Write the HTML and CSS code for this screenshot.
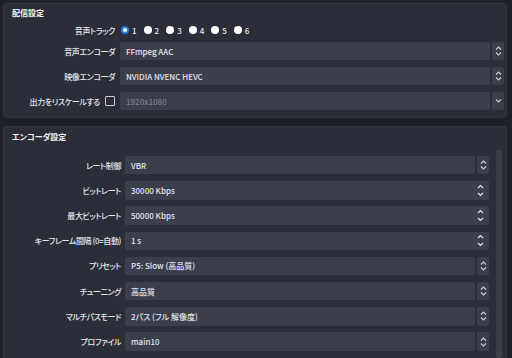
FILE: index.html
```html
<!DOCTYPE html>
<html lang="ja">
<head>
    <meta charset="UTF-8">
    <title>配信設定</title>
    <link rel="stylesheet" href="styles.css">
</head>
<body>

<section class="panel panel-stream">
    <h2 class="panel-title">配信設定</h2>
    <div class="rows">
        <div class="row row-radio">
            <label class="label">音声トラック</label>
            <div class="tracks">
                <span class="track"><span class="radio checked"></span>1</span>
                <span class="track"><span class="radio"></span>2</span>
                <span class="track"><span class="radio"></span>3</span>
                <span class="track"><span class="radio"></span>4</span>
                <span class="track"><span class="radio"></span>5</span>
                <span class="track"><span class="radio"></span>6</span>
            </div>
        </div>
        <div class="row">
            <label class="label">音声エンコーダ</label>
            <div class="combo">
                <div class="field">FFmpeg AAC</div>
                <div class="btn"><svg width="7" height="10" viewBox="0 0 7 10"><path d="M1 3.5 3.5 1 6 3.5M1 6.5 3.5 9 6 6.5" fill="none" stroke="#c8ccd4" stroke-width="1.1"/></svg></div>
            </div>
        </div>
        <div class="row">
            <label class="label">映像エンコーダ</label>
            <div class="combo">
                <div class="field">NVIDIA NVENC HEVC</div>
                <div class="btn"><svg width="7" height="10" viewBox="0 0 7 10"><path d="M1 3.5 3.5 1 6 3.5M1 6.5 3.5 9 6 6.5" fill="none" stroke="#c8ccd4" stroke-width="1.1"/></svg></div>
            </div>
        </div>
        <div class="row">
            <label class="label">出力をリスケールする <span class="checkbox"></span></label>
            <div class="combo">
                <div class="field disabled">1920x1080</div>
                <div class="btn"><svg width="7" height="6" viewBox="0 0 7 6"><path d="M1 1.5 3.5 4 6 1.5" fill="none" stroke="#c8ccd4" stroke-width="1.2"/></svg></div>
            </div>
        </div>
    </div>
</section>

<section class="panel panel-encoder">
    <h2 class="panel-title">エンコーダ設定</h2>
    <div class="scroll">
        <div class="rows rows-encoder">
            <div class="row">
                <label class="label">レート制御</label>
                <div class="combo">
                    <div class="field">VBR</div>
                    <div class="btn"><svg width="7" height="10" viewBox="0 0 7 10"><path d="M1 3.5 3.5 1 6 3.5M1 6.5 3.5 9 6 6.5" fill="none" stroke="#c8ccd4" stroke-width="1.1"/></svg></div>
                </div>
            </div>
            <div class="row">
                <label class="label">ビットレート</label>
                <div class="spin">
                    <span>30000 Kbps</span>
                    <span class="arrows">
                        <svg width="7" height="5" viewBox="0 0 7 5"><path d="M1 4 3.5 1.5 6 4" fill="none" stroke="#e0e3ea" stroke-width="1.2"/></svg>
                        <svg width="7" height="5" viewBox="0 0 7 5"><path d="M1 1 3.5 3.5 6 1" fill="none" stroke="#e0e3ea" stroke-width="1.2"/></svg>
                    </span>
                </div>
            </div>
            <div class="row">
                <label class="label">最大ビットレート</label>
                <div class="spin">
                    <span>50000 Kbps</span>
                    <span class="arrows">
                        <svg width="7" height="5" viewBox="0 0 7 5"><path d="M1 4 3.5 1.5 6 4" fill="none" stroke="#e0e3ea" stroke-width="1.2"/></svg>
                        <svg width="7" height="5" viewBox="0 0 7 5"><path d="M1 1 3.5 3.5 6 1" fill="none" stroke="#e0e3ea" stroke-width="1.2"/></svg>
                    </span>
                </div>
            </div>
            <div class="row">
                <label class="label">キーフレーム間隔 (0=自動)</label>
                <div class="spin">
                    <span>1 s</span>
                    <span class="arrows">
                        <svg width="7" height="5" viewBox="0 0 7 5"><path d="M1 4 3.5 1.5 6 4" fill="none" stroke="#e0e3ea" stroke-width="1.2"/></svg>
                        <svg width="7" height="5" viewBox="0 0 7 5"><path d="M1 1 3.5 3.5 6 1" fill="none" stroke="#e0e3ea" stroke-width="1.2"/></svg>
                    </span>
                </div>
            </div>
            <div class="row">
                <label class="label">プリセット</label>
                <div class="combo">
                    <div class="field">P5: Slow (高品質)</div>
                    <div class="btn"><svg width="7" height="10" viewBox="0 0 7 10"><path d="M1 3.5 3.5 1 6 3.5M1 6.5 3.5 9 6 6.5" fill="none" stroke="#c8ccd4" stroke-width="1.1"/></svg></div>
                </div>
            </div>
            <div class="row">
                <label class="label">チューニング</label>
                <div class="combo">
                    <div class="field">高品質</div>
                    <div class="btn"><svg width="7" height="10" viewBox="0 0 7 10"><path d="M1 3.5 3.5 1 6 3.5M1 6.5 3.5 9 6 6.5" fill="none" stroke="#c8ccd4" stroke-width="1.1"/></svg></div>
                </div>
            </div>
            <div class="row">
                <label class="label">マルチパスモード</label>
                <div class="combo">
                    <div class="field">2パス (フル 解像度)</div>
                    <div class="btn"><svg width="7" height="10" viewBox="0 0 7 10"><path d="M1 3.5 3.5 1 6 3.5M1 6.5 3.5 9 6 6.5" fill="none" stroke="#c8ccd4" stroke-width="1.1"/></svg></div>
                </div>
            </div>
            <div class="row">
                <label class="label">プロファイル</label>
                <div class="combo">
                    <div class="field">main10</div>
                    <div class="btn"><svg width="7" height="10" viewBox="0 0 7 10"><path d="M1 3.5 3.5 1 6 3.5M1 6.5 3.5 9 6 6.5" fill="none" stroke="#c8ccd4" stroke-width="1.1"/></svg></div>
                </div>
            </div>
        </div>
        <div class="scrollbar"></div>
    </div>
</section>

</body>
</html>
```

FILE: styles.css
```css
body {
    margin: 0;
    padding: 3px 5px 0 3px;
    height: 358px;
    box-sizing: border-box;
    overflow: hidden;
    background-color: #1f2129;
    color: #e3e6ed;
    font-family: "Noto Sans CJK JP", "Noto Sans", sans-serif;
    font-size: 8px;
    font-weight: 500;
    font-feature-settings: "palt";
    display: flex;
    flex-direction: column;
    gap: 8px;
}
.panel {
    background-color: #2b2e38;
    border: 1px solid #33363f;
    border-radius: 4px;
}
.panel-stream {
    padding: 3px 2px 7px 8px;
}
.panel-encoder {
    flex: 1;
    min-height: 0;
    padding: 4px 4px 0 8px;
    border-bottom: none;
    border-radius: 4px 4px 0 0;
    display: flex;
    flex-direction: column;
}
.panel-title {
    margin: 0;
    font-size: 8px;
    font-weight: bold;
    line-height: 12px;
    color: #f2f4f8;
}
.rows {
    display: flex;
    flex-direction: column;
    gap: 7px;
    margin-top: 5px;
}
.row {
    display: grid;
    grid-template-columns: 103px 1fr;
    column-gap: 5px;
    align-items: center;
    height: 18px;
}
.row-radio {
    height: 12px;
    margin-bottom: -1px;
}
.label {
    text-align: right;
    white-space: nowrap;
    letter-spacing: -0.4px;
    display: flex;
    justify-content: flex-end;
    align-items: center;
    gap: 5px;
}
.tracks {
    display: flex;
    gap: 7px;
    margin-left: 1px;
}
.track {
    display: flex;
    align-items: center;
    gap: 3px;
}
.radio {
    width: 8px;
    height: 8px;
    border-radius: 50%;
    background-color: #ffffff;
    box-sizing: border-box;
}
.radio.checked {
    background-color: #ffffff;
    border: 2.5px solid #1a7fe0;
}
.checkbox {
    width: 10px;
    height: 10px;
    border: 1px solid #c9ccd3;
    border-radius: 1px;
    box-sizing: border-box;
}
.combo {
    display: flex;
    gap: 2px;
    height: 100%;
}
.field {
    flex: 1;
    background-color: #3b3f4b;
    border-radius: 2px;
    padding-left: 6px;
    display: flex;
    align-items: center;
}
.field.disabled {
    color: #7b7f8a;
}
.btn {
    width: 12px;
    background-color: #3b3f4b;
    border-radius: 2px;
    display: flex;
    align-items: center;
    justify-content: center;
}
.scroll {
    flex: 1;
    min-height: 0;
    display: flex;
    gap: 7px;
    margin-top: 7px;
}
.rows-encoder {
    flex: 1;
    margin-top: 6px;
    gap: 6.8px;
}
.rows-encoder .row {
    grid-template-columns: 109px 1fr;
    column-gap: 4px;
    height: 18.4px;
}
.spin {
    height: 100%;
    background-color: #3b3f4b;
    border-radius: 2px;
    padding-left: 6px;
    display: flex;
    align-items: center;
    justify-content: space-between;
}
.arrows {
    display: flex;
    flex-direction: column;
    gap: 3px;
    margin-right: 5px;
}
.arrows svg {
    display: block;
}
.scrollbar {
    width: 6px;
    background-color: #3b3f4b;
    border-radius: 2px;
}
```
